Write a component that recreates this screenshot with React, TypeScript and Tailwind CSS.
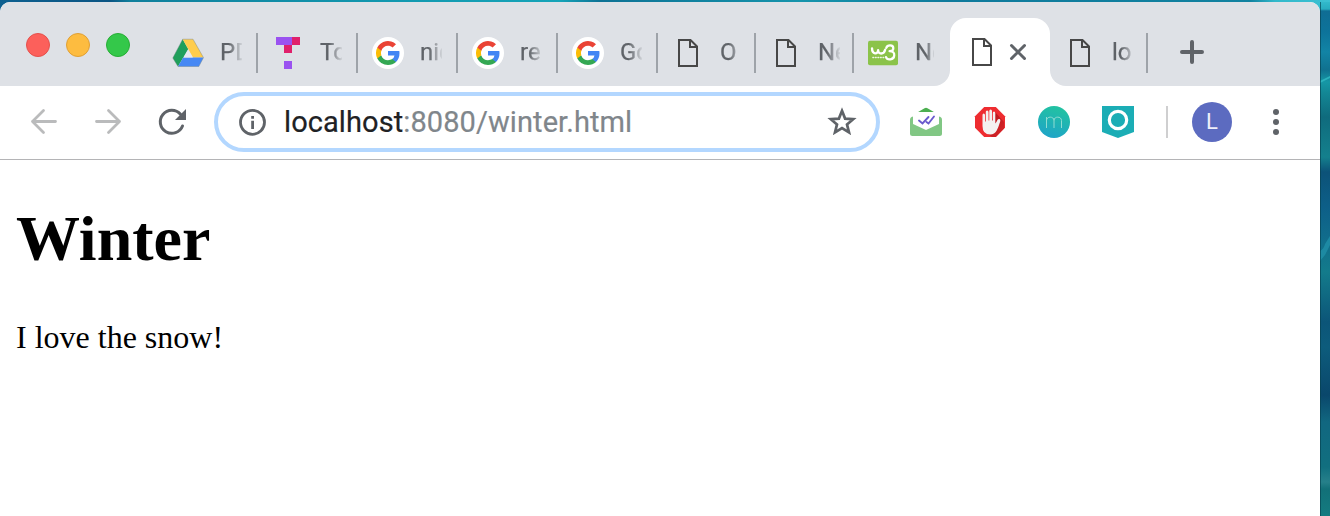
import type { ReactNode } from "react";

function DriveIcon() {
  return (
    <svg className="size-8" viewBox="0 0 32 32">
      <path d="M10.700 2.200 16.200 12 6 29.500.800 21z" fill="#1f9f5b" />
      <path d="M10.700 2.200H21l10.500 18.300H21z" fill="#ffcd4d" />
      <path d="M11.200 20.500h20.300l-4.700 9H6z" fill="#4688f4" />
      <path d="M16.200 12.500 20.800 20.500h-9.200z" fill="#e6e9ee" />
      <path d="M10.700 2.200H21l10.500 18.500-4.700 8.800H6L.800 21z" fill="none" stroke="#6f7f80" strokeOpacity=".5" strokeWidth=".8" />
    </svg>
  );
}

function TIcon() {
  return (
    <svg className="size-8" viewBox="0 0 32 32" shapeRendering="crispEdges">
      <path d="M4 0h16v8H4zM12 24h8v8h-8z" fill="#9a52f0" />
      <path d="M20 0h8v8h-8zM12 8h8v8h-8z" fill="#e0206b" />
    </svg>
  );
}

function GoogleIcon() {
  return (
    <svg className="size-8" viewBox="0 0 32 32">
      <circle cx="16" cy="16" r="16" fill="#fff" />
      <g transform="translate(4 4)">
        <path d="M23.5 12.3c0-.8-.1-1.6-.2-2.3H12v4.5h6.5a5.5 5.500 0 0 1-2.400 3.600v3h3.900c2.200-2.100 3.500-5.100 3.500-8.800z" fill="#4285f4" />
        <path d="M12 24c3.200 0 6-1.100 8-2.900l-3.900-3c-1.100.7-2.500 1.200-4.100 1.200-3.100 0-5.800-2.100-6.700-4.900h-4v3.100A12 12 0 0 0 12 24z" fill="#34a853" />
        <path d="M5.300 14.300a7.200 7.200 0 0 1 0-4.600V6.600h-4a12 12 0 0 0 0 10.800z" fill="#fbbc05" />
        <path d="M12 4.800c1.800 0 3.300.6 4.600 1.800L20 3.200A12 12 0 0 0 1.300 6.600l4 3.100C6.200 6.900 8.900 4.800 12 4.800z" fill="#ea4335" />
      </g>
    </svg>
  );
}

function FileIcon() {
  return (
    <svg className="size-8" viewBox="0 0 32 32" fill="none" stroke="#474747" strokeWidth="2">
      <path d="M7 3h11.500L25 9.500V29H7z" />
      <path d="M18 3v7h7" />
    </svg>
  );
}

function W3Icon() {
  return (
    <svg className="size-8" viewBox="0 0 32 32">
      <rect y="3" width="32" height="26" rx="2" fill="#8bc34a" />
      <g fill="none" stroke="#fff" strokeLinecap="round" strokeLinejoin="round">
        <path d="M4.300 11c0 6.800 6.500 6.800 6.500 2 0 4.800 6.200 4.800 7.500-.500" strokeWidth="2.500" />
        <path d="M19.500 10.500c1.200-3.600 7.500-3.400 7.500.3 0 2.200-2 3.200-4 3.200 3.500 0 5.300 1.600 5 4.500-.4 5.300-7.600 5.700-8.800 1.800" strokeWidth="2.400" />
        <path d="M5.200 20.800h12" strokeWidth="1.500" strokeDasharray=".8 1.900" strokeOpacity=".85" />
      </g>
    </svg>
  );
}

const titleClass =
  "ml-4 w-[22px] overflow-hidden whitespace-nowrap pb-[2px] text-[24px] leading-8 text-[#5f6368] [-webkit-text-stroke:0.25px_#5f6368] [mask-image:linear-gradient(to_right,#000_40%,rgba(0,0,0,0.1))]";

function Tab({ icon, title, narrow = false }: { icon: ReactNode; title: string; narrow?: boolean }) {
  return (
    <div className={`flex h-10 shrink-0 items-center border-r-2 border-[#9ea3a9] pl-[14px] ${narrow ? "w-[98px]" : "w-[100px]"}`}>
      {icon}
      <span className={titleClass}>{title}</span>
    </div>
  );
}

function TabStrip() {
  return (
    <div className="flex h-[84px] shrink-0 bg-[#dee1e6]">
      <div className="flex w-[158px] shrink-0 gap-4 pt-[31px] pl-[26px]">
        <div className="size-6 rounded-full border border-[#e5504c] bg-[#fc605b]" />
        <div className="size-6 rounded-full border border-[#e0a035] bg-[#fdbc40]" />
        <div className="size-6 rounded-full border border-[#27ae35] bg-[#34c84a]" />
      </div>
      <div className="flex pt-[31px]">
        <Tab icon={<DriveIcon />} title="PD" />
        <Tab icon={<TIcon />} title="To" />
        <Tab icon={<GoogleIcon />} title="nic" />
        <Tab icon={<GoogleIcon />} title="re" />
        <Tab icon={<GoogleIcon />} title="Go" />
        <Tab icon={<FileIcon />} title="O" narrow />
        <Tab icon={<FileIcon />} title="Ne" narrow />
        <div className="flex h-10 w-[80px] shrink-0 items-center pl-[14px]">
          <W3Icon />
          <span className="ml-4 w-[20px] shrink-0 overflow-hidden whitespace-nowrap pb-[2px] pl-px text-[24px] leading-8 text-[#5f6368] [-webkit-text-stroke:0.25px_#5f6368] [mask-image:linear-gradient(to_right,#000_60%,rgba(0,0,0,0.1))]">
            Ne
          </span>
        </div>
      </div>
      <div className="w-4 shrink-0 bg-white">
        <div className="h-full rounded-br-[16px] bg-[#dee1e6]" />
      </div>
      <div className="flex bg-[#dee1e6] pt-4">
        <div className="flex h-[68px] w-[100px] rounded-t-[16px] bg-white pt-[18px] pl-4">
          <FileIcon />
          <svg className="ml-1 size-8" viewBox="0 0 32 32" stroke="#5f6368" strokeWidth="3" strokeLinecap="round">
            <path d="M9.500 9.500l13 13M22.500 9.500l-13 13" />
          </svg>
        </div>
      </div>
      <div className="w-4 shrink-0 bg-white">
        <div className="h-full rounded-bl-[16px] bg-[#dee1e6]" />
      </div>
      <div className="flex pt-[31px]">
        <div className="flex h-10 w-[82px] items-center border-r-2 border-[#9ea3a9]">
          <div className="-ml-[2px]">
            <FileIcon />
          </div>
          <span className={titleClass}>lo</span>
        </div>
        <svg className="mt-[3px] ml-7 size-8" viewBox="0 0 32 32" stroke="#5f6368" strokeWidth="4" strokeLinecap="round">
          <path d="M16 6v20M6 16h20" />
        </svg>
      </div>
    </div>
  );
}

function MailIcon() {
  return (
    <svg className="size-8" viewBox="0 0 32 32">
      <path d="M3 9 14.500 2.200q1.500-1 3 0L29 9v7H3z" fill="#4caf50" />
      <path d="M0 14q0-3.500 3.500-3.500h25q3.500 0 3.500 3.500v13.500q0 2.500-2.500 2.500h-27Q0 30 0 27.500z" fill="#81c784" />
      <path d="M4.500 6h23q1.500 0 1.500 1.500V18l-13 6L3 18V7.500Q3 6 4.500 6z" fill="#fff" />
      <path d="M9 14.500l3.500 3 6-6.500M16.500 16l2 1.500L24 10.500" fill="none" stroke="#6a5acd" strokeWidth="1.900" strokeLinecap="round" />
    </svg>
  );
}

function HandIcon() {
  return (
    <svg className="size-8" viewBox="0 0 32 32">
      <defs>
        <linearGradient id="hand-shade" x1=".2" y1="0" x2="1" y2=".9">
          <stop stopColor="#b3161b" />
          <stop offset="1" stopColor="#d8262a" />
        </linearGradient>
      </defs>
      <path d="M10.200 1h11.600L31 10.200v11.600L21.800 31H10.200L1 21.800V10.200z" fill="#ee2c30" />
      <path d="M21 6l9 10v6.500L21.800 31H18l-4-3z" fill="url(#hand-shade)" />
      <path d="M8.500 20V9q0-1.500 1.200-1.500T11 9v6.500h.8V6q0-1.600 1.300-1.600t1.400 1.600v8.500h.8V5q0-1.600 1.300-1.600T18 5v9.500h.8V7q0-1.500 1.200-1.500T21.300 7v10.500q1.200-1.300 2-3.200.9-1.800 2.300-1.200 1.200.6.600 2.400-1.800 6-3.500 9-2.200 4-6.400 4-7.800 0-7.800-8.500z" fill="#f4f1f0" />
    </svg>
  );
}

function MIcon() {
  return (
    <svg className="size-8" viewBox="0 0 32 32" fill="none">
      <defs>
        <linearGradient id="m-disc" x1=".65" y1="0" x2=".35" y2="1">
          <stop stopColor="#22c3a0" />
          <stop offset="1" stopColor="#1fa4c8" />
        </linearGradient>
      </defs>
      <circle cx="16" cy="16" r="16" fill="url(#m-disc)" />
      <path d="M8.500 22V11M8.500 14.500c0-4.500 7.500-4.500 7.500 0V22M16 14.500c0-4.500 7.500-4.500 7.500 0V22" stroke="#8fdcd2" strokeWidth="1" />
    </svg>
  );
}

function ShieldIcon() {
  return (
    <svg className="size-8" viewBox="0 0 32 32">
      <path d="M0 0h32v26l-16 6-16-6z" fill="#1badb5" />
      <circle cx="16" cy="14" r="8.700" fill="none" stroke="#fff" strokeWidth="3.200" />
    </svg>
  );
}

function Toolbar() {
  return (
    <div className="flex h-[74px] shrink-0 items-center border-b border-[#b4b4b6] bg-white pb-px pl-7">
      <div className="flex gap-8">
        <svg className="size-8" viewBox="0 0 32 32" fill="none" stroke="#babbbc" strokeWidth="2.800" strokeLinecap="round" strokeLinejoin="round">
          <path d="M27.500 15.500h-23M15.500 4.500l-11 11 11 11" />
        </svg>
        <svg className="size-8" viewBox="0 0 32 32" fill="none" stroke="#babbbc" strokeWidth="2.800" strokeLinecap="round" strokeLinejoin="round">
          <path d="M4.500 15.500h23M16.500 4.500l11 11-11 11" />
        </svg>
        <svg className="size-8" viewBox="0 0 32 32" fill="none">
          <path d="M26.500 20A11.500 11.500 0 1 1 24.500 8.300" stroke="#5f6368" strokeWidth="3" strokeLinecap="round" />
          <path d="M30 3v11H19z" fill="#5f6368" />
        </svg>
      </div>
      <div className="ml-[26px] flex h-[60px] w-[666px] shrink-0 items-center rounded-full border-4 border-[#b3d7ff] pr-[16px] pl-[18px]">
        <svg className="size-8" viewBox="0 0 32 32">
          <circle cx="16.500" cy="16.300" r="12" fill="none" stroke="#5f6368" strokeWidth="2.800" />
          <path d="M15.200 10h2.800v2.800h-2.800zM15.200 14.700h2.800V23h-2.800z" fill="#5f6368" />
        </svg>
        <span className="ml-4 flex-1 whitespace-nowrap text-[29px] leading-9 tracking-[0.08px] text-[#202124] [-webkit-text-stroke:0.2px_currentColor]">
          localhost<span className="text-[#80868b]">:8080/winter.html</span>
        </span>
        <svg className="mr-[2px] size-8" viewBox="0 0 32 32" fill="none" stroke="#5f6368" strokeWidth="2.700">
          <path d="M16 4.800l3.100 7.800 8.100.600-6.200 5.200 2 8-7-4.400-7 4.400 2-8-6.200-5.200 8.100-.600z" />
        </svg>
      </div>
      <div className="ml-[30px] flex gap-8">
        <MailIcon />
        <HandIcon />
        <MIcon />
        <ShieldIcon />
      </div>
      <div className="ml-8 h-8 w-[2px] bg-[#cfcfd0]" />
      <div className="ml-6 flex size-10 items-center justify-center rounded-full bg-[#5c6bc0] text-[22px] leading-none text-white/90">L</div>
      <svg className="ml-7 size-8" viewBox="0 0 32 32" fill="#5f6368">
        <circle cx="16" cy="6" r="3" />
        <circle cx="16" cy="16" r="3" />
        <circle cx="16" cy="26" r="3" />
      </svg>
    </div>
  );
}

export default function App() {
  return (
    <div className="flex h-[516px] w-[1330px] flex-col overflow-hidden bg-[linear-gradient(to_right,#0d6090,#0b5584_110px,#0f7f9c_130px,#1299b0_400px,#16a4b8_560px,#0d7295_600px,#1594ac_800px,#0e7a9c_950px,#1182a0_1250px,#32b9cb_1275px,#3cc0d2)] pt-[2px] font-[Roboto,sans-serif]">
      <div className="flex min-h-0 flex-1">
        <div className="flex w-[1320px] shrink-0 flex-col overflow-hidden rounded-t-[10px] bg-white">
          <TabStrip />
          <Toolbar />
          <main className="flex-1 px-4 pt-[42px] font-['Liberation_Serif',serif] text-black">
            <h1 className="text-[64px] leading-[74px] font-bold">Winter</h1>
            <p className="mt-[43px] text-[32px] leading-9">I love the snow!</p>
          </main>
        </div>
        <div className="relative flex-1 bg-[linear-gradient(to_bottom,#32b9cb,#28acc0_7px,#0f6d94_9px,#0d739a_30px,#1284a5_50px,#10718f_68px,#1697a5_80px,#138896_90px,#0f6b7d_115px,#14808d_155px,#0c5278_170px,#0d5f88_205px,#116e8c_240px,#137b8b_270px,#0c5578_320px,#0d5c7c_345px,#0a476b_393px,#116780_420px,#116f7f_465px,#26808a_480px,#127078_487px,#147b80)]">
          <svg className="absolute inset-0 h-full w-full" viewBox="0 0 10 514" preserveAspectRatio="none">
            <path d="M0 79 10 74v2L0 81z" fill="#2cb2bd" />
            <path d="M0 249q4-2 5-7l5-8v9l-5 10-5 6z" fill="#2294ad" fillOpacity=".7" />
            <path d="M0 0h1v514H0z" fill="#06404f" fillOpacity=".65" />
          </svg>
        </div>
      </div>
    </div>
  );
}
